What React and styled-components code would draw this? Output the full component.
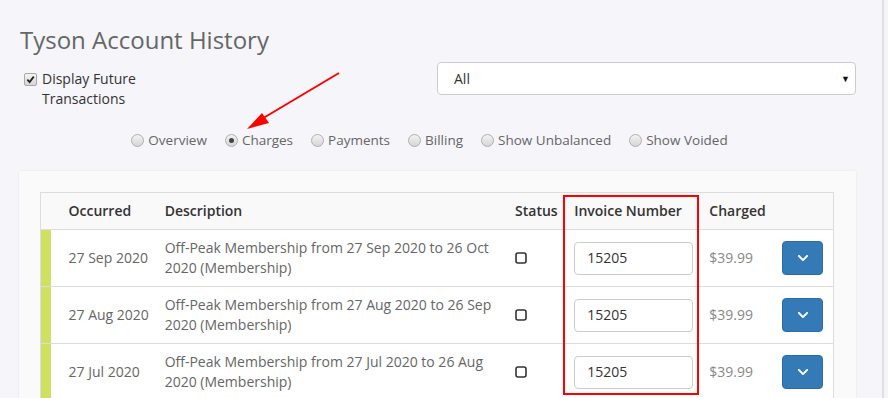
import React from "react";
import styled, { createGlobalStyle } from "styled-components";
import { FaChevronDown } from "react-icons/fa";

const Global = createGlobalStyle`
  html, body { margin: 0; padding: 0; background: #f4f4f9; }
  body { font-family: "Open Sans", "Liberation Sans", sans-serif; font-size: 14px; color: #333; }
  * { box-sizing: border-box; }
`;

const Page = styled.div`
  position: relative;
  width: 884px;
  min-height: 398px;
  background: #f5f5fa;
  border-right: 2px solid #e0e0e4;
  padding: 26px 26px 0 19px;
`;

const Title = styled.h1`
  margin: 0 0 0 1px;
  font-size: 24px;
  line-height: 28px;
  font-weight: 400;
  color: #666;
`;

const TopRow = styled.div`
  display: flex;
  justify-content: space-between;
  align-items: flex-start;
  margin-top: 8px;
`;

const CheckGroup = styled.label`
  display: flex;
  align-items: flex-start;
  gap: 5px;
  padding: 7px 0 0 5px;
  width: 140px;
  line-height: 20px;
  color: #333;
`;

const FakeCheck = styled.span`
  flex: none;
  width: 13px;
  height: 13px;
  margin-top: 4px;
  border: 1px solid #a8a8a8;
  border-radius: 2px;
  background: linear-gradient(#f4f4f4, #d6d6d6);
  display: flex;
  align-items: center;
  justify-content: center;
`;

const Select = styled.div`
  width: 419px;
  height: 33px;
  background: #fff;
  border: 1px solid #ccc;
  border-radius: 4px;
  display: flex;
  align-items: center;
  justify-content: space-between;
  padding: 0 5px 0 16px;
  color: #333;
`;

const Caret = styled.span`
  font-size: 9px;
  color: #111;
`;

const RadioRow = styled.div`
  display: flex;
  justify-content: center;
  gap: 18px;
  margin-top: 21px;
  padding-right: 16px;
  line-height: 20px;
  font-size: 13.5px;
`;

const RadioItem = styled.label`
  display: flex;
  align-items: center;
  gap: 4px;
  color: #666;
`;

const RadioDot = styled.span`
  width: 13px;
  height: 13px;
  border-radius: 50%;
  border: 1px solid #b0b0b0;
  background: linear-gradient(#f2f2f2, #d6d6d6);
  display: flex;
  align-items: center;
  justify-content: center;
  &::after {
    content: "";
    width: 5px;
    height: 5px;
    border-radius: 50%;
    background: ${(p) => (p.$checked ? "#444" : "transparent")};
  }
`;

const Panel = styled.div`
  margin-top: 21px;
  background: #fafafa;
  box-shadow: 0 0 2px rgba(0, 0, 0, 0.08);
  padding: 21px 22px 0 21px;
`;

const Table = styled.table`
  width: 794px;
  border-collapse: collapse;
  border: 1px solid #ddd;
  background: #fff;
  table-layout: fixed;
`;

const Th = styled.th`
  text-align: left;
  font-weight: 600;
  color: #333;
  padding: 8px ${(p) => p.$pr ?? 8}px 8px ${(p) => p.$pl ?? 8}px;
  line-height: 20px;
  background: #f9f9f9;
  border-bottom: 1px solid #ddd;
  white-space: nowrap;
`;

const Tr = styled.tr`
  border-top: 1px solid #ddd;
`;

const Td = styled.td`
  padding: 8px ${(p) => p.$pr ?? 8}px 8px ${(p) => p.$pl ?? 8}px;
  line-height: 20px;
  vertical-align: middle;
  color: ${(p) => p.$color || "#666"};
`;

const BarCell = styled.td`
  padding: 0;
  background: #d0e063;
`;

const StatusBox = styled.svg`
  display: block;
`;

const InvoiceInput = styled.div`
  width: 119px;
  height: 33px;
  border: 1px solid #ccc;
  border-radius: 4px;
  background: #fff;
  display: flex;
  align-items: center;
  padding-left: 12px;
  color: #333;
`;

const ActionButton = styled.button`
  width: 41px;
  height: 34px;
  border: 1px solid #2e6da4;
  border-radius: 4px;
  background: #337ab7;
  color: #fff;
  display: flex;
  align-items: center;
  justify-content: center;
  padding: 0;
`;

const Highlight = styled.div`
  position: absolute;
  left: 563px;
  top: 195px;
  width: 136px;
  height: 200px;
  border: 2px solid #f00;
  pointer-events: none;
`;

const Arrow = styled.svg`
  position: absolute;
  left: 240px;
  top: 66px;
  pointer-events: none;
`;

const rows = [
  { date: "27 Sep 2020", desc: "Off-Peak Membership from 27 Sep 2020 to 26 Oct 2020 (Membership)" },
  { date: "27 Aug 2020", desc: "Off-Peak Membership from 27 Aug 2020 to 26 Sep 2020 (Membership)" },
  { date: "27 Jul 2020", desc: "Off-Peak Membership from 27 Jul 2020 to 26 Aug 2020 (Membership)" },
];

const radios = ["Overview", "Charges", "Payments", "Billing", "Show Unbalanced", "Show Voided"];

export default function App() {
  return (
    <>
      <Global />
      <Page>
        <Title>Tyson Account History</Title>
        <TopRow>
          <CheckGroup>
            <FakeCheck>
              <svg width="9" height="9" viewBox="0 0 10 10">
                <path d="M1.5 5.2 L4 7.8 L8.6 1.8" fill="none" stroke="#222" strokeWidth="2" />
              </svg>
            </FakeCheck>
            <span>Display Future Transactions</span>
          </CheckGroup>
          <Select>
            <span>All</span>
            <Caret>▼</Caret>
          </Select>
        </TopRow>
        <RadioRow>
          {radios.map((r) => (
            <RadioItem key={r}>
              <RadioDot $checked={r === "Charges"} />
              {r}
            </RadioItem>
          ))}
        </RadioRow>
        <Panel>
          <Table>
            <colgroup>
              <col style={{ width: 10 }} />
              <col style={{ width: 106 }} />
              <col style={{ width: 350 }} />
              <col style={{ width: 59 }} />
              <col style={{ width: 135 }} />
              <col style={{ width: 73 }} />
              <col style={{ width: 59 }} />
            </colgroup>
            <thead>
              <tr>
                <Th $pl={0} />
                <Th $pl={18}>Occurred</Th>
                <Th>Description</Th>
                <Th $pr={0}>Status</Th>
                <Th>Invoice Number</Th>
                <Th>Charged</Th>
                <Th />
              </tr>
            </thead>
            <tbody>
              {rows.map((r) => (
                <Tr key={r.date}>
                  <BarCell />
                  <Td $pl={18} $pr={0}>{r.date}</Td>
                  <Td>{r.desc}</Td>
                  <Td>
                    <StatusBox width="12" height="12" viewBox="0 0 12 12">
                      <rect x="1" y="1" width="10" height="10" rx="2" fill="none" stroke="#333" strokeWidth="1.6" />
                    </StatusBox>
                  </Td>
                  <Td>
                    <InvoiceInput>15205</InvoiceInput>
                  </Td>
                  <Td $color="#888">$39.99</Td>
                  <Td>
                    <ActionButton>
                      <FaChevronDown size={12} />
                    </ActionButton>
                  </Td>
                </Tr>
              ))}
            </tbody>
          </Table>
        </Panel>
        <Highlight />
        <Arrow width="104" height="70" viewBox="0 0 104 70">
          <line x1="99" y1="7" x2="20" y2="54" stroke="#f00" strokeWidth="2" />
          <polygon points="7,63 22,47 29,57" fill="#f00" />
        </Arrow>
      </Page>
    </>
  );
}
